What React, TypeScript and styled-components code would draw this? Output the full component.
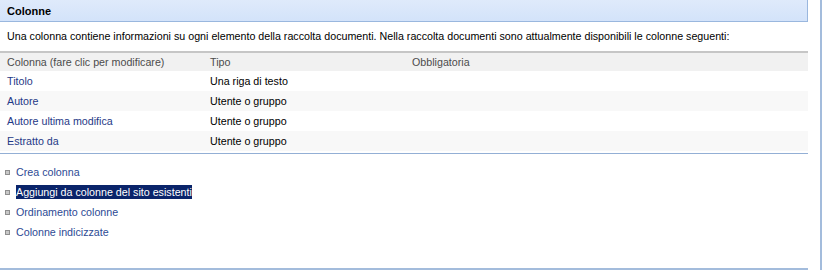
import React from 'react'
import styled, { createGlobalStyle } from 'styled-components'

const GlobalStyle = createGlobalStyle`
  html, body {
    margin: 0;
    padding: 0;
    background: #ffffff;
  }
  body {
    font-family: Tahoma, 'Liberation Sans', Arial, sans-serif;
    font-size: 10.7px;
  }
`;

const Page = styled.div`
  width: 824px;
  height: 270px;
  display: flex;
  overflow: hidden;
`;

const Main = styled.div`
  width: 808px;
  display: flex;
  flex-direction: column;
`;

const SideRule = styled.div`
  width: 14px;
  border-right: 2px solid #a3bcdc;
  box-sizing: border-box;
`;

const SectionBar = styled.div`
  height: 22px;
  box-sizing: border-box;
  background: linear-gradient(#dfeafb, #d3e3fa);
  border-bottom: 1px solid #9ab7de;
  border-right: 1px solid #9ab7de;
  display: flex;
  align-items: center;
  padding-left: 7px;
  font-weight: bold;
  font-size: 11px;
  color: #000000;
`;

const Description = styled.div`
  padding: 8px 0 0 7px;
  height: 29px;
  box-sizing: border-box;
  color: #000000;
`;

const Table = styled.div`
  border-top: 2px solid #c6c6c6;
  border-bottom: 1px solid #93afd5;
  padding-bottom: 2px;
`;

const Row = styled.div<{ $shade?: string; $head?: boolean }>`
  display: grid;
  grid-template-columns: 203px 202px 1fr;
  height: ${p => (p.$head ? '18px' : '20px')};
  align-items: center;
  padding-left: 7px;
  background: ${p => p.$shade || '#ffffff'};
`;

const HeadCell = styled.div`
  color: #4c4c4c;
`;

const LinkCell = styled.div`
  color: #1f3a87;
`;

const Cell = styled.div`
  color: #000000;
`;

const Actions = styled.ul`
  list-style: none;
  margin: 0;
  padding: 8px 0 0 5px;
  flex: 1;
  border-bottom: 2px solid #a3bcdc;
`;

const Action = styled.li`
  display: flex;
  align-items: center;
  height: 20px;
  color: #2d4a94;
`;

const Bullet = styled.span`
  width: 5px;
  height: 5px;
  box-sizing: border-box;
  border: 1px solid #8f8f8f;
  background: #c8c8c8;
  margin-right: 6px;
`;

const Label = styled.span<{ $selected?: boolean }>`
  background: ${p => (p.$selected ? '#0a246a' : 'transparent')};
  color: ${p => (p.$selected ? '#ffffff' : 'inherit')};
  line-height: 14px;
`;

const rows = [
  { name: 'Titolo', type: 'Una riga di testo' },
  { name: 'Autore', type: 'Utente o gruppo' },
  { name: 'Autore ultima modifica', type: 'Utente o gruppo' },
  { name: 'Estratto da', type: 'Utente o gruppo' },
]

const actions = [
  'Crea colonna',
  'Aggiungi da colonne del sito esistenti',
  'Ordinamento colonne',
  'Colonne indicizzate',
]

const App = () => {
  return (
    <Page>
      <GlobalStyle />
      <Main>
        <SectionBar>Colonne</SectionBar>
        <Description>
          Una colonna contiene informazioni su ogni elemento della raccolta documenti. Nella raccolta documenti sono attualmente disponibili le colonne seguenti:
        </Description>
        <Table>
          <Row $head $shade="#f1f1f1">
            <HeadCell>Colonna (fare clic per modificare)</HeadCell>
            <HeadCell>Tipo</HeadCell>
            <HeadCell>Obbligatoria</HeadCell>
          </Row>
          {rows.map((r, i) => (
            <Row key={r.name} $shade={i % 2 ? '#f8f8f8' : '#ffffff'}>
              <LinkCell>{r.name}</LinkCell>
              <Cell>{r.type}</Cell>
              <Cell></Cell>
            </Row>
          ))}
        </Table>
        <Actions>
          {actions.map((a, i) => (
            <Action key={a}>
              <Bullet />
              <Label $selected={i === 1}>{a}</Label>
            </Action>
          ))}
        </Actions>
      </Main>
      <SideRule />
    </Page>
  )
}

export default App
